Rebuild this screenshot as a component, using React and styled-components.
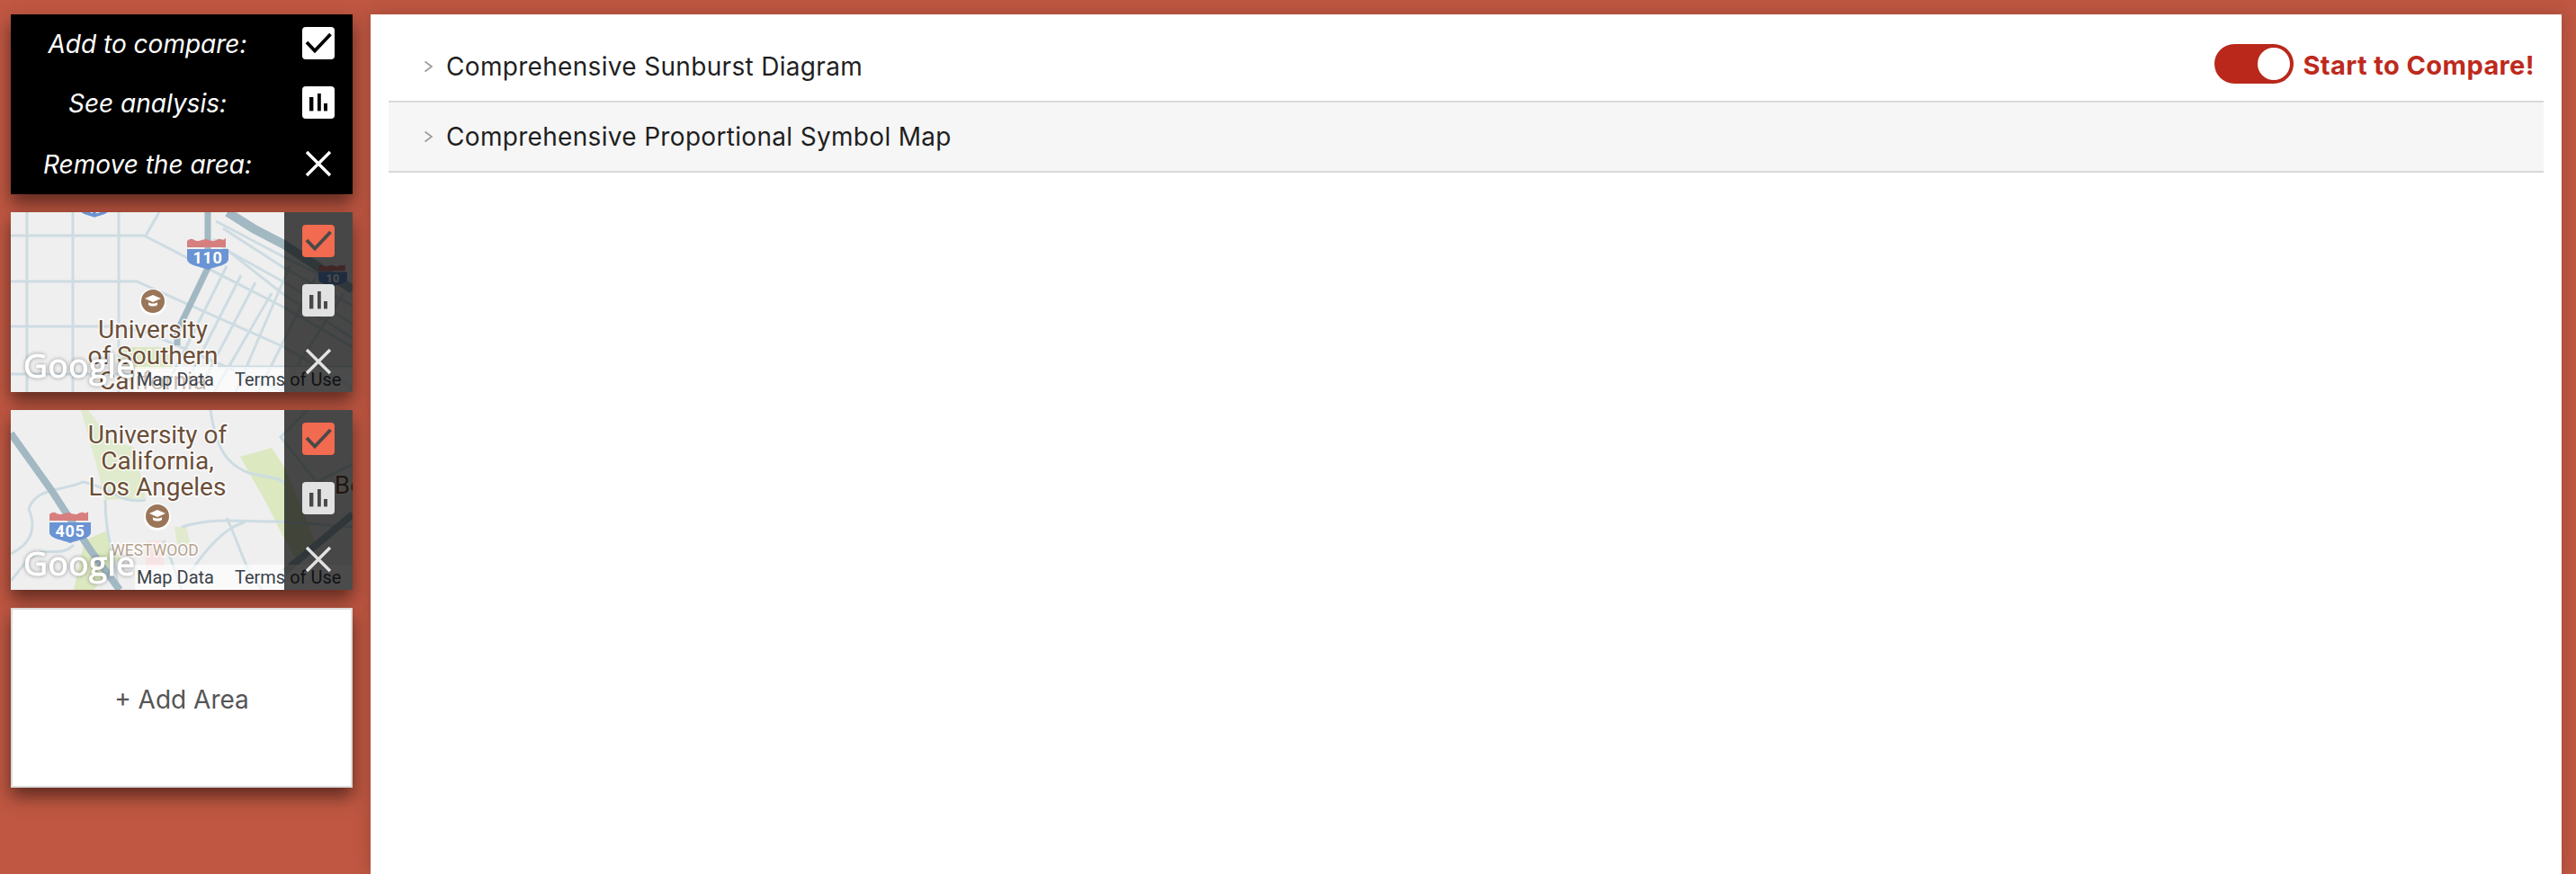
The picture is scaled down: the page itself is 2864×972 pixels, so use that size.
import React from 'react'
import styled, { createGlobalStyle } from 'styled-components';

const GlobalStyle = createGlobalStyle`
  html, body {
    margin: 0;
    padding: 0;
    height: 100%;
    overflow: hidden;
    background: #bf5742;
    font-family: Inter, "Liberation Sans", sans-serif;
  }
  #root {
    height: 100%;
  }
`;

const Page = styled.div`
  display: flex;
  height: 972px;
  background: #bf5742;
`;

const Sidebar = styled.aside`
  flex: 0 0 412px;
  box-sizing: border-box;
  padding: 16px 20px 0 12px;
  display: flex;
  flex-direction: column;
  gap: 20px;
`;

const Card = styled.div`
  position: relative;
  height: 200px;
  box-shadow: 0 10px 18px rgba(0, 0, 0, 0.5);
`;

const Legend = styled(Card)`
  background: #000;
  display: grid;
  grid-template-columns: 304px 76px;
  grid-template-rows: 64px 68px 68px;
  align-items: center;
  justify-items: center;
`;

const LegendLabel = styled.span`
  color: #fff;
  font-size: 28px;
  font-style: italic;
  padding-top: 2px;
`;

const Overlay = styled.div`
  position: absolute;
  top: 0;
  right: 0;
  bottom: 0;
  width: 76px;
  background: rgba(0, 0, 0, 0.7);
  display: grid;
  grid-template-rows: 64px 68px 68px;
  align-items: center;
  justify-items: center;
`;

const IconBox = styled.div`
  width: 36px;
  height: 36px;
  border-radius: 4px;
  background: ${p => p.$bg};
  display: flex;
  svg {
    display: block;
  }
`;

const MapCanvas = styled.svg`
  display: block;
  width: 380px;
  height: 200px;
  background: #efefef;
`;

const Attribution = styled.div`
  position: absolute;
  left: 138px;
  right: 0;
  bottom: 0;
  height: 28px;
  background: rgba(255, 255, 255, 0.65);
  display: flex;
  align-items: center;
  font-family: Roboto, sans-serif;
  font-size: 20px;
  color: #3b4148;
  white-space: nowrap;
`;

const AttrLink = styled.span`
  margin-left: ${p => p.$left}px;
`;

const GoogleText = styled.text`
  font-family: "Open Sans", sans-serif;
  font-size: 37px;
  letter-spacing: 0.5px;
  fill: #fff;
  stroke: #fff;
  stroke-width: 1px;
  filter: drop-shadow(0 0 2px rgba(0, 0, 0, 0.4));
`;

const AddCard = styled(Card)`
  box-sizing: border-box;
  background: #fff;
  border: 2px solid #ddd;
  display: flex;
  align-items: center;
  justify-content: center;
  padding-top: 4px;
  color: #555;
  font-size: 28px;
`;

const Main = styled.main`
  flex: 1;
  margin: 16px 16px 0 0;
  padding: 20px 20px 0;
  background: #fff;
  box-shadow: 0 0 18px rgba(0, 0, 0, 0.18);
`;

const Row = styled.div`
  display: flex;
  align-items: center;
  height: 76px;
  padding: 0 10px 0 39px;
  background: ${p => (p.$shaded ? '#f6f6f6' : '#fff')};
  border-bottom: 2px solid #d9d9d9;
`;

const Chevron = styled.svg`
  flex: none;
  width: 11px;
  height: 16px;
  margin-right: 14px;
`;

const RowTitle = styled.span`
  font-size: 28px;
  letter-spacing: 0.32px;
  color: #1f1f1f;
`;

const CompareControl = styled.div`
  margin-left: auto;
  display: flex;
  align-items: center;
  gap: 10px;
  margin-bottom: 6px;
`;

const Toggle = styled.div`
  box-sizing: border-box;
  width: 88px;
  height: 44px;
  padding: 4px;
  border-radius: 22px;
  background: #b9281a;
  display: flex;
  justify-content: flex-end;
`;

const Thumb = styled.div`
  width: 36px;
  height: 36px;
  border-radius: 50%;
  background: #fff;
`;

const CompareLabel = styled.span`
  font-size: 29px;
  letter-spacing: 0.4px;
  font-weight: 700;
  color: #bd2a1c;
  margin-top: 2px;
`;

const CheckIcon = ({ color }) => (
  <svg width="36" height="36" viewBox="0 0 36 36" fill="none">
    <path d="M5 17l9 9.5L31.5 8" stroke={color} strokeWidth="3.8" />
  </svg>
);

const ChartIcon = ({ color }) => (
  <svg width="36" height="36" viewBox="0 0 36 36" fill={color}>
    <rect x="8" y="12" width="4.4" height="15.4" />
    <rect x="17" y="8" width="3.8" height="19.4" />
    <rect x="24" y="19" width="4" height="8.4" />
  </svg>
);

const CloseIcon = ({ color }) => (
  <svg width="30" height="30" viewBox="0 0 30 30" fill="none">
    <path d="M2 2l26 26M28 2L2 28" stroke={color} strokeWidth="3.4" />
  </svg>
);

const Shield = ({ x, y, w, label }) => {
  const s = w / 46;
  return (
    <g transform={`translate(${x} ${y}) scale(${s})`}>
      <path d="M-23 -14 q4 -4 8 -1 q4 2 8 0 q7 -2 8 0 q7 2 8 0 q4 -2 6 -1 q2 2 5 -1 V-7 H-23z" fill="#d77f7f" />
      <path d="M-23 -5 H23 V6 C23 13 10 14 0 18 C-10 14 -23 13 -23 6z" fill="#6a94d4" />
      <text x="0" y="11" textAnchor="middle" fontFamily="Roboto, sans-serif" fontWeight="700" fontSize="18" letterSpacing="0.6" fill="#fff">{label}</text>
    </g>
  );
};

const SchoolMarker = ({ x, y }) => (
  <g transform={`translate(${x} ${y})`}>
    <circle r="15" cy="1" fill="#fff" />
    <circle r="13" fill="#9a7558" />
    <path d="M-9 -3L0 -7l9 4L0 1z" fill="#fff" />
    <path d="M-5 1c2 2 8 2 10 0v3c-2 2-8 2-10 0z" fill="#fff" />
  </g>
);

const Label = ({ x, y, size = 28, color = '#6b4e38', children }) => (
  <text
    x={x}
    y={y}
    textAnchor="middle"
    fontFamily="Roboto, sans-serif"
    fontSize={size}
    fill={color}
    stroke="#fff"
    strokeOpacity="0.85"
    strokeWidth="3"
    paintOrder="stroke"
  >
    {children}
  </text>
);

const GoogleMark = () => <GoogleText x="14" y="184">Google</GoogleText>;

const streets = '#cddce2';
const highway = '#a2b8c2';

const UscMap = () => (
  <MapCanvas viewBox="0 0 380 200">
    <path d="M120 150h60v24h-60z" fill="#dde6c4" />
    <g fill="none" stroke={streets} strokeWidth="3">
      <path d="M18 0V200M69 0V200M120 0V200" />
      <path d="M0 26H148L304 106L380 150" />
      <path d="M0 77H140L304 150L380 195" />
      <path d="M0 127H120L150 133L304 200" />
      <path d="M0 180H140M230 172H380" />
      <path d="M165 0L150 26M228 10L304 50L380 88" />
      <path d="M236 18L304 62L380 104M236 40L304 78L380 124" />
      <path d="M240 60L170 200M256 70L190 200M272 78L208 200M290 90L226 200" />
      <path d="M310 60L250 200M340 70L275 200M370 90L300 200" />
      <path d="M225 30L304 92L380 140" />
    </g>
    <path d="M219 0V62L195 112L185 132V148" fill="none" stroke={highway} strokeWidth="7" />
    <path d="M241 0L271 19L304 36L380 86" fill="none" stroke={highway} strokeWidth="10" />
    <Shield x={93} y={-6} w={30} label="10" />
    <Shield x={219} y={46} w={46} label="110" />
    <Shield x={358} y={70} w={32} label="10" />
    <SchoolMarker x={158} y={99} />
    <Label x={158} y={140}>University</Label>
    <Label x={158} y={169}>of Southern</Label>
    <Label x={158} y={197}>California</Label>
    <GoogleMark />
  </MapCanvas>
);

const UclaMap = () => (
  <MapCanvas viewBox="0 0 380 200">
    <g fill="#dbe8c0">
      <path d="M255 52L290 42L305 65L322 105L340 150L320 172L300 135L285 105z" />
      <path d="M78 0H86L110 32L138 42L150 98L105 100L95 60z" opacity="0.75" />
      <path d="M82 145L105 135L122 165L92 200H70z" />
      <path d="M182 130H195L200 150H185z" opacity="0.7" />
    </g>
    <path d="M150 145h20v30h-20z" fill="#f6e3e3" />
    <g fill="none" stroke={streets} strokeWidth="3">
      <path d="M222 0C228 40 238 60 265 70C290 76 300 75 304 82" />
      <path d="M0 160C20 150 30 135 20 110C28 85 60 90 80 80C110 85 120 105 150 100" />
      <path d="M105 100C105 140 115 160 120 200" />
      <path d="M0 190L20 165C40 150 55 165 70 150" />
      <path d="M190 130C230 118 260 125 300 124L380 130" />
      <path d="M240 120C255 150 260 180 280 200M200 180C220 150 240 130 260 125" />
      <path d="M170 145C180 170 185 185 190 200" />
      <path d="M330 0L300 30L340 80L380 60" />
    </g>
    <path d="M0 26L45 89L88 155L121 200" fill="none" stroke={highway} strokeWidth="8" />
    <path d="M304 180L380 116" fill="none" stroke={highway} strokeWidth="8" />
    <Shield x={66} y={130} w={46} label="405" />
    <Label x={163} y={37}>University of</Label>
    <Label x={163} y={66}>California,</Label>
    <Label x={163} y={95}>Los Angeles</Label>
    <Label x={376} y={93}>Be</Label>
    <SchoolMarker x={163} y={118} />
    <Label x={160} y={162} size={17.5} color="#b5a28f">WESTWOOD</Label>
    <GoogleMark />
  </MapCanvas>
);

const AreaCard = ({ children }) => (
  <Card>
    {children}
    <Attribution>
      <AttrLink $left={2}>Map Data</AttrLink>
      <AttrLink $left={23}>Terms of Use</AttrLink>
    </Attribution>
    <Overlay>
      <IconBox $bg="#f26a4f"><CheckIcon color="#494949" /></IconBox>
      <IconBox $bg="#e2e2e2"><ChartIcon color="#494949" /></IconBox>
      <CloseIcon color="#e2e2e2" />
    </Overlay>
  </Card>
);

const ChevronIcon = () => (
  <Chevron viewBox="0 0 11 16" fill="none">
    <path d="M1.5 2.5L9 8l-7.5 5.5" stroke="#999" strokeWidth="1.6" />
  </Chevron>
);

const App = () => (
  <>
    <GlobalStyle />
    <Page>
      <Sidebar>
        <Legend>
          <LegendLabel>Add to compare:</LegendLabel>
          <IconBox $bg="#fff"><CheckIcon color="#000" /></IconBox>
          <LegendLabel>See analysis:</LegendLabel>
          <IconBox $bg="#fff"><ChartIcon color="#000" /></IconBox>
          <LegendLabel>Remove the area:</LegendLabel>
          <CloseIcon color="#fff" />
        </Legend>
        <AreaCard><UscMap /></AreaCard>
        <AreaCard><UclaMap /></AreaCard>
        <AddCard>+ Add Area</AddCard>
      </Sidebar>
      <Main>
        <Row>
          <ChevronIcon />
          <RowTitle>Comprehensive Sunburst Diagram</RowTitle>
          <CompareControl>
            <Toggle><Thumb /></Toggle>
            <CompareLabel>Start to Compare!</CompareLabel>
          </CompareControl>
        </Row>
        <Row $shaded>
          <ChevronIcon />
          <RowTitle>Comprehensive Proportional Symbol Map</RowTitle>
        </Row>
      </Main>
    </Page>
  </>
);

export default App;
